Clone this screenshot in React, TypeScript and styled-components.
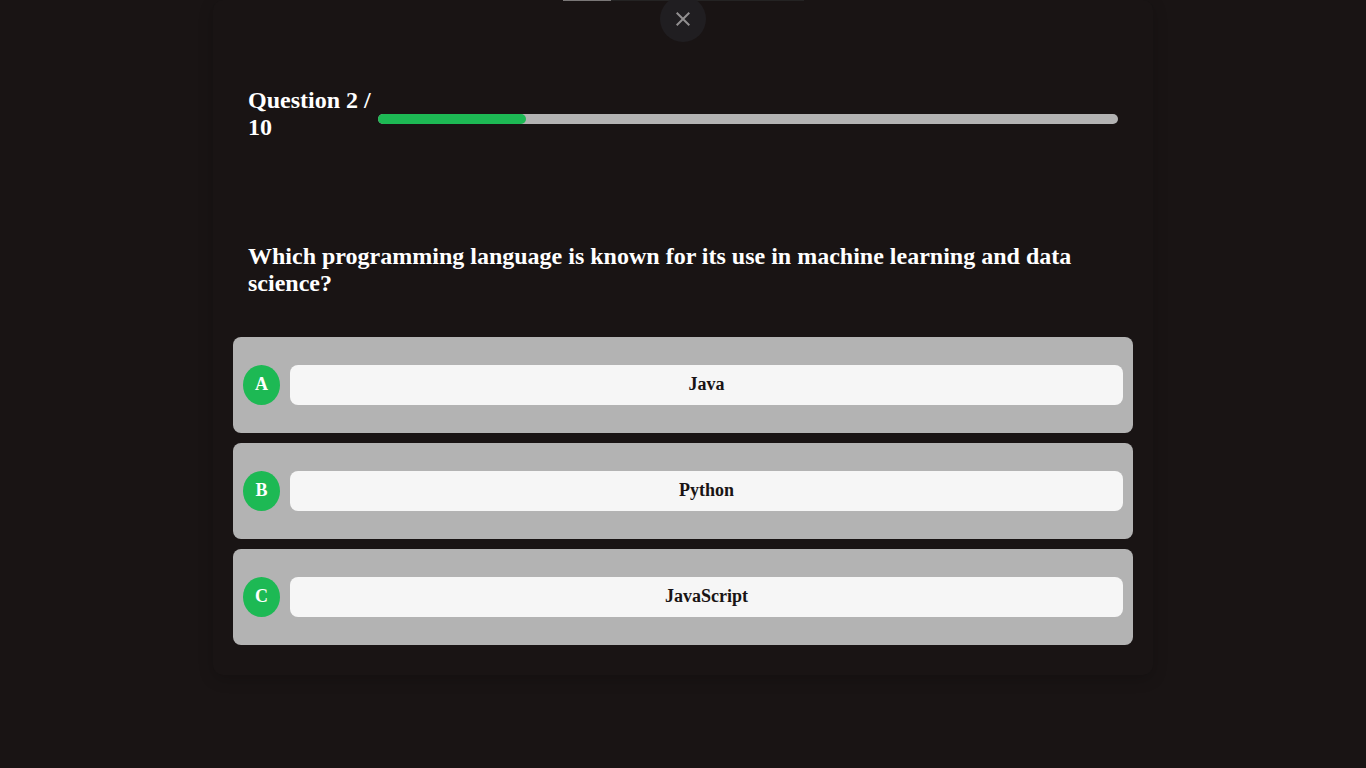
import React, { useState } from "react";
import styled, { createGlobalStyle } from "styled-components";

const GlobalStyle = createGlobalStyle`
  *, *::before, *::after { box-sizing: border-box; }
  body {
    margin: 0;
    background: #191414;
    color: #ffffff;
    font-family: "Liberation Serif", "Times New Roman", serif;
  }
`;

const Page = styled.div`
  display: flex;
  justify-content: center;
  min-height: 100vh;
`;

const Card = styled.main`
  display: flex;
  flex-direction: column;
  align-self: flex-start;
  width: 100%;
  max-width: 940px;
  padding: 72px 20px 30px;
  border-radius: 10px;
  background: #191414;
  box-shadow: 0 4px 15px rgba(0, 0, 0, 0.2);
`;

const TopStrip = styled.div`
  position: absolute;
  top: 0;
  left: 50%;
  width: 241px;
  height: 1px;
  margin-left: -120px;
  background: #242323;
`;

const TopStripFill = styled.div`
  width: 20%;
  height: 100%;
  background: #7a7777;
`;

const CloseButton = styled.button`
  position: absolute;
  top: -4px;
  left: 50%;
  display: flex;
  align-items: center;
  justify-content: center;
  width: 46px;
  height: 46px;
  margin-left: -23px;
  padding: 0;
  border: 0;
  border-radius: 50%;
  background: #201e21;
  color: #918f90;
  cursor: pointer;
`;

const Header = styled.header`
  display: flex;
  align-items: flex-start;
  padding: 15px;
`;

const Heading = styled.h2`
  margin: 0;
  font-size: 24px;
  line-height: 27px;
`;

const Counter = styled(Heading)`
  flex: none;
  width: 130px;
`;

const Track = styled.div`
  flex: 1;
  height: 10px;
  margin-top: 27px;
  border-radius: 5px;
  background: #b3b3b3;
`;

const Fill = styled.div`
  height: 100%;
  border-radius: 5px;
  background: #1db954;
`;

const QuestionBlock = styled.section`
  margin-top: 72px;
  padding: 15px;
`;

const Options = styled.ul`
  display: flex;
  flex-direction: column;
  gap: 10px;
  margin: 25px 0 0;
  padding: 0;
  list-style: none;
`;

const Option = styled.li`
  display: flex;
  align-items: center;
  gap: 10px;
  min-height: 96px;
  padding: 10px;
  border-radius: 8px;
  background: #b3b3b3;
`;

const Letter = styled.span`
  display: flex;
  flex: none;
  align-items: center;
  justify-content: center;
  width: 37px;
  height: 40px;
  padding-bottom: 2px;
  border-radius: 50%;
  background: #1db954;
  font-size: 18px;
  font-weight: bold;
  line-height: 20px;
`;

const Answer = styled.button`
  flex: 1;
  height: 40px;
  padding: 0 10px 2px;
  border: 0;
  border-radius: 8px;
  background: #f6f6f6;
  color: #191414;
  font: bold 18px/20px "Liberation Serif", "Times New Roman", serif;
  cursor: pointer;
`;

const answers = ["Java", "Python", "JavaScript"];

export default function App() {
  const [current] = useState(2);
  const total = 10;
  return (
    <Page>
      <GlobalStyle />
      <Card>
        <Header>
          <Counter as="h1">Question {current} / {total}</Counter>
          <Track role="progressbar" aria-label="Quiz progress" aria-valuenow={current} aria-valuemin={0} aria-valuemax={total}>
            <Fill style={{ width: `${(current / total) * 100}%` }} />
          </Track>
        </Header>
        <QuestionBlock>
          <Heading>
            Which programming language is known for its use in machine learning and data science?
          </Heading>
        </QuestionBlock>
        <Options>
          {answers.map((answer, i) => {
            const letter = String.fromCharCode(65 + i);
            return (
              <Option key={answer}>
                <Letter id={`letter-${letter}`}>{letter}</Letter>
                <Answer type="button" aria-describedby={`letter-${letter}`}>{answer}</Answer>
              </Option>
            );
          })}
        </Options>
      </Card>
      <TopStrip><TopStripFill /></TopStrip>
      <CloseButton type="button" aria-label="Close">
        <svg width="14" height="14" viewBox="0 0 14 14" fill="none" stroke="currentColor" strokeWidth="2">
          <path d="M0.7 0.7 L13.3 13.3 M13.3 0.7 L0.7 13.3" />
        </svg>
      </CloseButton>
    </Page>
  );
}
